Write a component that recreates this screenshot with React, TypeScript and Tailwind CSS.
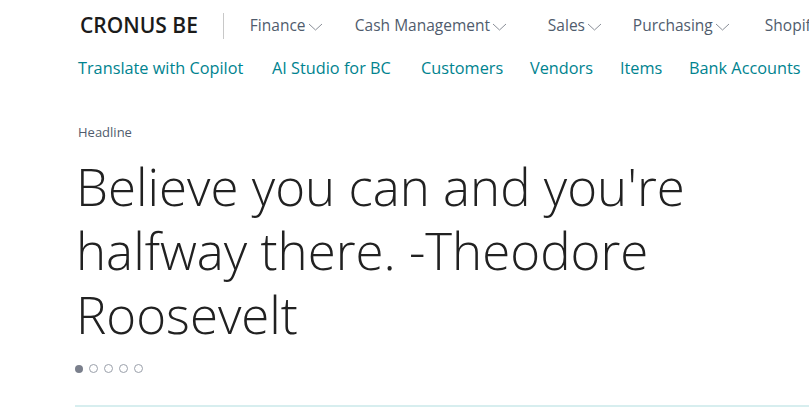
import React from "react";

const Chevron = () => (
  <svg width="15" height="8" viewBox="0 0 15 8" className="ml-[2px] mt-[2px]" fill="none">
    <path d="M1 1l6.5 6 6.5-6" stroke="#8a8f98" strokeWidth="1" />
  </svg>
);

const menus: [string, string][] = [
  ["Finance", "w-[105px]"],
  ["Cash Management", "w-[193px]"],
  ["Sales", "w-[85px]"],
  ["Purchasing", "w-[132px]"],
];
const links: [string, string][] = [
  ["Translate with Copilot", "w-[194px]"],
  ["AI Studio for BC", "w-[149px]"],
  ["Customers", "w-[109px]"],
  ["Vendors", "w-[90px]"],
  ["Items", "w-[69px]"],
  ["Bank Accounts", "w-[130px]"],
];

export default function App() {
  return (
    <div className="w-[809px] h-[407px] overflow-hidden bg-white" style={{ fontFamily: '"Open Sans", "Noto Sans", sans-serif' }}>
      <div className="flex items-center h-[50px] pl-[80px] pt-[2px] whitespace-nowrap">
        <div className="text-[21px] font-semibold text-[#1b1b1b] tracking-[0px]">CRONUS BE</div>
        <div className="w-px h-[26px] bg-[#c8c8c8] ml-[25px] mr-[26px] shrink-0" />
        <div className="flex items-center text-[15.5px] text-[#505c6d]">
          {menus.map(([m, w]) => (
            <div key={m} className={`flex items-center shrink-0 ${w}`}>
              <span>{m}</span>
              <Chevron />
            </div>
          ))}
          <span>Shopify</span>
        </div>
      </div>
      <div className="flex items-center h-[36px] pl-[78px] text-[16.3px] text-[#00838f] whitespace-nowrap">
        {links.map(([l, w]) => (
          <span key={l} className={`shrink-0 ${w}`}>{l}</span>
        ))}
      </div>
      <div className="pl-[78px] pt-[36px]">
        <div className="text-[13px] text-[#505c6d] leading-[20px]">Headline</div>
        <div className="text-[51px] font-light text-[#212121] leading-[64px] mt-[12px] w-[640px] -ml-[2px]">
          Believe you can and you're halfway there. -Theodore Roosevelt
        </div>
        <div className="flex items-center gap-[6px] mt-[18px] -ml-[3px]">
          <div className="w-[8px] h-[8px] rounded-full bg-[#7a7f8c]" />
          {[0, 1, 2, 3].map((i) => (
            <div key={i} className="w-[9px] h-[9px] rounded-full border border-[#9aa0aa]" />
          ))}
        </div>
        <div className="h-[2px] bg-[#d7eeef] mt-[32px] -ml-[3px]" />
      </div>
    </div>
  );
}
